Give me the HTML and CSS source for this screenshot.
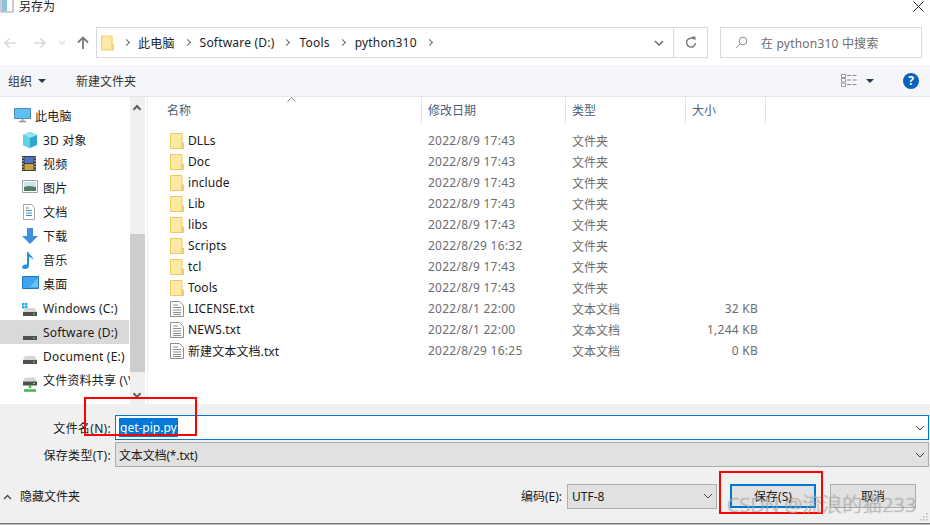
FILE: index.html
```html
<!DOCTYPE html>
<html lang="zh-CN">

<head>
    <meta charset="UTF-8">
    <title>另存为</title>
    <link rel="stylesheet" href="styles.css">
</head>

<body>
    <svg class="sprites" width="0" height="0">
        <symbol id="folder" viewBox="0 0 14 16">
            <path d="M.5.5h11.5v15H.5z" fill="#fde9a3" stroke="#efcb5c" />
            <path d="M12 10h1.500v5.500H12z" fill="#f8dc80" stroke="#efcb5c" />
        </symbol>
        <symbol id="txt" viewBox="0 0 14 16">
            <path d="M.5.5h9l4 4v11H.5z" fill="#fff" stroke="#8e8e8e" />
            <path d="M3 4h5M3 6.500h8M3 9h8M3 11.500h8M3 13.500h8" stroke="#8e8e8e" />
        </symbol>
        <symbol id="drive" viewBox="0 0 14 8">
            <path d="M2 0h10l2 4H0z" fill="#d6d6d6" />
            <path d="M0 4h14v4H0z" fill="#4f4f4f" />
            <path d="M10 5.500h2v1h-2z" fill="#6fe06f" />
        </symbol>
    </svg>

    <div class="dialog">
        <div class="title-bar">
            <svg class="title-icon" width="14" height="14" viewBox="0 0 14 14">
                <path d="M1 0h12v13H1z" fill="#fff" stroke="#9a9a9a" />
                <path d="M2 0h5v12H2z" fill="#8cc3de" />
            </svg>
            <span class="title-text">另存为</span>
            <svg class="close" width="11" height="11" viewBox="0 0 11 11">
                <path d="M.5.500l10 10M10.500.500l-10 10" stroke="#222" fill="none" />
            </svg>
        </div>

        <div class="nav-bar">
            <div class="nav-buttons">
                <svg width="14" height="12" viewBox="0 0 14 12">
                    <path d="M13 6H2M6.500 1.500L2 6l4.500 4.500" stroke="#d8d8d8" stroke-width="1.600" fill="none" />
                </svg>
                <svg width="14" height="12" viewBox="0 0 14 12">
                    <path d="M1 6h11M7.500 1.500L12 6l-4.500 4.500" stroke="#d8d8d8" stroke-width="1.600" fill="none" />
                </svg>
                <svg width="8" height="6" viewBox="0 0 8 6">
                    <path d="M1 1l3 3 3-3" stroke="#d8d8d8" stroke-width="1.300" fill="none" />
                </svg>
                <svg width="12" height="14" viewBox="0 0 12 14">
                    <path d="M6 13V2M1 6.500L6 1.500l5 5" stroke="#7a7a7a" stroke-width="1.800" fill="none" />
                </svg>
            </div>
            <div class="address">
                <svg class="address-folder" width="13" height="16">
                    <use href="#folder" />
                </svg>
                <span class="crumb-arrow"></span>
                <span class="crumb">此电脑</span>
                <span class="crumb-arrow"></span>
                <span class="crumb">Software (D:)</span>
                <span class="crumb-arrow"></span>
                <span class="crumb">Tools</span>
                <span class="crumb-arrow"></span>
                <span class="crumb">python310</span>
                <span class="crumb-arrow"></span>
                <svg class="address-down" width="10" height="6" viewBox="0 0 10 6">
                    <path d="M1 1l4 4 4-4" stroke="#6d6d6d" stroke-width="1.500" fill="none" />
                </svg>
                <div class="refresh">
                    <svg width="12" height="13" viewBox="0 0 12 13">
                        <path d="M8.800 3A4.500 4.500 0 1 0 10.500 7" stroke="#7a7a7a" stroke-width="1.500" fill="none" />
                        <path d="M6.500 0.500h4v4z" fill="#7a7a7a" />
                    </svg>
                </div>
            </div>
            <div class="search">
                <svg width="13" height="13" viewBox="0 0 13 13">
                    <circle cx="8" cy="5" r="3.800" stroke="#8a8a8a" fill="none" />
                    <path d="M5.200 7.800L1 12" stroke="#8a8a8a" fill="none" />
                </svg>
                <span>在 python310 中搜索</span>
            </div>
        </div>

        <div class="toolbar">
            <span class="tool">组织</span>
            <span class="tool-caret"></span>
            <span class="tool tool-new">新建文件夹</span>
            <svg class="view-icon" width="16" height="13" viewBox="0 0 16 13">
                <path d="M.5.500h4v3h-4zM.5 4.500h4v3.500h-4zM.5 9h4v3.500h-4z" fill="none" stroke="#9a9a9a" />
                <path d="M6 1.500h4M11.500 1.500h4M6 6h4M11.500 6h4M6 10.500h4M11.500 10.500h4" stroke="#8a8a8a" />
            </svg>
            <span class="tool-caret tool-caret-view"></span>
            <span class="help">?</span>
        </div>

        <div class="browser">
            <div class="sidebar">
                <div class="side-list">
                    <div class="side-row side-top">
                        <svg width="17" height="15" viewBox="0 0 17 15">
                            <path d="M.5.500h16v10H.5z" fill="#5cc0f0" stroke="#4a8cb5" />
                            <path d="M5 13.500h7M8.500 11v2" stroke="#8a9aa5" stroke-width="1.500" />
                        </svg>
                        <span>此电脑</span>
                    </div>
                    <div class="side-row">
                        <svg width="16" height="16" viewBox="0 0 16 16">
                            <path d="M8 0l7 3v10l-7 3-7-3V3z" fill="#2ba8c9" />
                            <path d="M1 3l7 3 7-3-7-3z" fill="#8fe4ee" />
                            <path d="M1 3l7 3v10l-7-3z" fill="#5fd3e0" />
                        </svg>
                        <span>3D 对象</span>
                    </div>
                    <div class="side-row">
                        <svg width="14" height="15" viewBox="0 0 14 15">
                            <path d="M0 0h14v15H0z" fill="#3b3b3b" />
                            <path d="M2.500 1h9v6h-9z" fill="#4a74c9" />
                            <path d="M2.500 8h9v6h-9z" fill="#c9a13b" />
                            <path d="M1 1v13M13 1v13" stroke="#ddd" stroke-dasharray="1.500 1.500" />
                        </svg>
                        <span>视频</span>
                    </div>
                    <div class="side-row">
                        <svg width="16" height="13" viewBox="0 0 16 13">
                            <path d="M.5.500h15v12H.5z" fill="#fff" stroke="#a0a0a0" />
                            <path d="M2 2h12v5H2z" fill="#cfe3ee" />
                            <path d="M2 7l5-1 7 1v4H2z" fill="#4e7d63" />
                        </svg>
                        <span>图片</span>
                    </div>
                    <div class="side-row">
                        <svg width="14" height="16" viewBox="0 0 14 16">
                            <path d="M1.500.500h8l3 3v12h-11z" fill="#fff" stroke="#a8a8a8" />
                            <path d="M4 4h3M4 6.500h6M4 9h6M4 11.500h6" stroke="#3e8fc4" />
                        </svg>
                        <span>文档</span>
                    </div>
                    <div class="side-row">
                        <svg width="16" height="16" viewBox="0 0 16 16">
                            <path d="M5 0h6v8h5l-8 8-8-8h5z" fill="#3f8fdc" />
                        </svg>
                        <span>下载</span>
                    </div>
                    <div class="side-row">
                        <svg width="12" height="17" viewBox="0 0 12 17">
                            <path d="M5 0h1.500c.5 3 5 4 4.500 8-1-2-2.500-3-4-3v9c0 2-2 3-4 3s-3-1-3-2 2-3 5-2.500z" fill="#2b8fe0" />
                        </svg>
                        <span>音乐</span>
                    </div>
                    <div class="side-row">
                        <svg width="17" height="13" viewBox="0 0 17 13">
                            <path d="M.5.500h16v12H.5z" fill="#3ea6ee" stroke="#1a78c8" />
                            <path d="M8 11l8-9v9z" fill="#6cc3f5" />
                        </svg>
                        <span>桌面</span>
                    </div>
                    <div class="side-row side-drive">
                        <svg width="15" height="17" viewBox="0 0 15 17">
                            <path d="M0 0h2.500v2.500H0zM3 0h2.500v2.500H3zM0 3h2.500v2.500H0zM3 3h2.500v2.500H3z" fill="#25b0ea" />
                            <use href="#drive" x="1" y="5" width="14" height="8" />
                        </svg>
                        <span>Windows (C:)</span>
                    </div>
                    <div class="side-row side-drive side-on">
                        <svg width="15" height="17" viewBox="0 0 15 17">
                            <use href="#drive" x="1" y="5" width="14" height="8" />
                        </svg>
                        <span>Software (D:)</span>
                    </div>
                    <div class="side-row side-drive">
                        <svg width="15" height="17" viewBox="0 0 15 17">
                            <use href="#drive" x="1" y="5" width="14" height="8" />
                        </svg>
                        <span>Document (E:)</span>
                    </div>
                    <div class="side-row side-share">
                        <svg width="15" height="15" viewBox="0 0 15 15">
                            <use href="#drive" x="1" y="0" width="14" height="9" />
                            <path d="M8 8v3M2 13.500h12" stroke="#3fb54a" stroke-width="2.500" />
                        </svg>
                        <span>文件资料共享 (\\</span>
                    </div>
                </div>
                <div class="side-scroll">
                    <span class="scroll-up"></span>
                    <span class="scroll-thumb"></span>
                    <span class="scroll-down"></span>
                </div>
            </div>

            <div class="files">
                <div class="file-head">
                    <span class="col-name">名称</span>
                    <span class="col-date">修改日期</span>
                    <span class="col-type">类型</span>
                    <span class="col-size">大小</span>
                    <svg class="sort-mark" width="9" height="5" viewBox="0 0 9 5">
                        <path d="M.5 4.500l4-4 4 4" stroke="#8a8a8a" fill="none" />
                    </svg>
                </div>
                <div class="file-row"><span class="file-name"><svg width="14" height="16"><use href="#folder" /></svg>DLLs</span><span class="file-date">2022/8/9 17:43</span><span class="file-type">文件夹</span><span class="file-size"></span></div>
                <div class="file-row"><span class="file-name"><svg width="14" height="16"><use href="#folder" /></svg>Doc</span><span class="file-date">2022/8/9 17:43</span><span class="file-type">文件夹</span><span class="file-size"></span></div>
                <div class="file-row"><span class="file-name"><svg width="14" height="16"><use href="#folder" /></svg>include</span><span class="file-date">2022/8/9 17:43</span><span class="file-type">文件夹</span><span class="file-size"></span></div>
                <div class="file-row"><span class="file-name"><svg width="14" height="16"><use href="#folder" /></svg>Lib</span><span class="file-date">2022/8/9 17:43</span><span class="file-type">文件夹</span><span class="file-size"></span></div>
                <div class="file-row"><span class="file-name"><svg width="14" height="16"><use href="#folder" /></svg>libs</span><span class="file-date">2022/8/9 17:43</span><span class="file-type">文件夹</span><span class="file-size"></span></div>
                <div class="file-row"><span class="file-name"><svg width="14" height="16"><use href="#folder" /></svg>Scripts</span><span class="file-date">2022/8/29 16:32</span><span class="file-type">文件夹</span><span class="file-size"></span></div>
                <div class="file-row"><span class="file-name"><svg width="14" height="16"><use href="#folder" /></svg>tcl</span><span class="file-date">2022/8/9 17:43</span><span class="file-type">文件夹</span><span class="file-size"></span></div>
                <div class="file-row"><span class="file-name"><svg width="14" height="16"><use href="#folder" /></svg>Tools</span><span class="file-date">2022/8/9 17:43</span><span class="file-type">文件夹</span><span class="file-size"></span></div>
                <div class="file-row"><span class="file-name"><svg width="14" height="16"><use href="#txt" /></svg>LICENSE.txt</span><span class="file-date">2022/8/1 22:00</span><span class="file-type">文本文档</span><span class="file-size">32 KB</span></div>
                <div class="file-row"><span class="file-name"><svg width="14" height="16"><use href="#txt" /></svg>NEWS.txt</span><span class="file-date">2022/8/1 22:00</span><span class="file-type">文本文档</span><span class="file-size">1,244 KB</span></div>
                <div class="file-row"><span class="file-name"><svg width="14" height="16"><use href="#txt" /></svg>新建文本文档.txt</span><span class="file-date">2022/8/29 16:25</span><span class="file-type">文本文档</span><span class="file-size">0 KB</span></div>
            </div>
        </div>

        <div class="save-panel">
            <div class="field-row">
                <label class="field-label">文件名(N):</label>
                <div class="field-input">
                    <span class="selected">get-pip.py</span>
                    <svg class="field-down" width="10" height="6" viewBox="0 0 10 6">
                        <path d="M1 1l4 4 4-4" stroke="#444" fill="none" />
                    </svg>
                </div>
            </div>
            <div class="field-row">
                <label class="field-label">保存类型(T):</label>
                <div class="field-select">
                    <span class="select-text">文本文档(*.txt)</span>
                    <svg class="field-down" width="10" height="6" viewBox="0 0 10 6">
                        <path d="M1 1l4 4 4-4" stroke="#444" fill="none" />
                    </svg>
                </div>
            </div>
            <div class="action-row">
                <svg class="hide-caret" width="9" height="6" viewBox="0 0 9 6">
                    <path d="M1 5l3.500-3.500L8 5" stroke="#555" stroke-width="1.500" fill="none" />
                </svg>
                <span class="hide-text">隐藏文件夹</span>
                <span class="enc-label">编码(E):</span>
                <div class="enc-select">
                    <span>UTF-8</span>
                    <svg width="10" height="6" viewBox="0 0 10 6">
                        <path d="M1 1l4 4 4-4" stroke="#444" fill="none" />
                    </svg>
                </div>
                <button class="btn btn-main">保存(S)</button>
                <button class="btn">取消</button>
            </div>
        </div>

        <svg class="grip" width="8" height="8" viewBox="0 0 8 8">
            <path d="M6 0h1.500v1.500H6zM3 3h1.500v1.500H3zM6 3h1.500v1.500H6zM0 6h1.500v1.500H0zM3 6h1.500v1.500H3zM6 6h1.500v1.500H6z" fill="#b8b8b8" />
        </svg>
        <div class="red-box red-name"></div>
        <div class="red-box red-save"></div>
        <div class="watermark">CSDN @流浪的猫233</div>
    </div>
</body>

</html>
```

FILE: styles.css
```css
* {
    box-sizing: border-box;
}

html, body {
    margin: 0;
    padding: 0;
}

body {
    width: 930px;
    height: 525px;
    overflow: hidden;
    background: #fff;
    font-family: "Noto Sans", "Noto Sans CJK SC", sans-serif;
    font-size: 12px;
    color: #1a1a1a;
}

.sprites {
    display: block;
    height: 0;
}

svg {
    display: block;
    flex: none;
}

.dialog {
    position: relative;
    width: 930px;
    height: 525px;
    overflow: hidden;
}

/* title */
.title-bar {
    display: flex;
    align-items: center;
    height: 13px;
}

.title-icon {
    margin-top: -1px;
}

.title-text {
    margin-left: 5px;
    line-height: 13px;
}

.close {
    margin-left: auto;
    margin-right: 6px;
}

/* address row */
.nav-bar {
    display: flex;
    align-items: flex-start;
    height: 52px;
    padding-top: 14px;
}

.nav-buttons {
    display: flex;
    align-items: center;
    width: 96px;
    height: 31px;
    padding-left: 3px;
}

.nav-buttons svg:nth-child(2) {
    margin-left: 16px;
}

.nav-buttons svg:nth-child(3) {
    margin-left: 11px;
}

.nav-buttons svg:nth-child(4) {
    margin-left: 11px;
}

.address {
    display: flex;
    align-items: center;
    width: 612px;
    height: 31px;
    padding-left: 4px;
    border: 1px solid #d9d9d9;
    color: #222;
    letter-spacing: .2px;
}

.crumb-arrow {
    width: 5px;
    height: 5px;
    margin: 0 10px;
    border-top: 1.5px solid #666;
    border-right: 1.5px solid #666;
    transform: rotate(45deg);
}

.address-folder + .crumb-arrow {
    margin-left: 10px;
    margin-right: 9px;
}

.address-down {
    margin-left: auto;
    margin-right: 9px;
}

.refresh {
    display: flex;
    align-items: center;
    justify-content: center;
    width: 34px;
    height: 29px;
    border-left: 1px solid #d9d9d9;
}

.search {
    display: flex;
    align-items: center;
    width: 202px;
    height: 31px;
    margin-left: 12px;
    padding-left: 14px;
    border: 1px solid #d9d9d9;
    color: #6d6d6d;
    letter-spacing: .2px;
}

.search span {
    margin-left: 13px;
}

/* toolbar */
.toolbar {
    display: flex;
    align-items: center;
    height: 32px;
    padding-left: 8px;
    background: #f4f6f9;
    border-bottom: 1px solid #e6e6e6;
    color: #333;
}

.tool-caret {
    width: 0;
    height: 0;
    margin-left: 6px;
    border-left: 4px solid transparent;
    border-right: 4px solid transparent;
    border-top: 4px solid #2a3a55;
}

.tool-new {
    margin-left: 30px;
}

.view-icon {
    margin-left: auto;
}

.tool-caret-view {
    margin-left: 9px;
}

.help {
    width: 16px;
    height: 16px;
    margin-left: 29px;
    margin-right: 11px;
    border-radius: 50%;
    background: #0a63b8;
    color: #fff;
    font-size: 12px;
    font-weight: 700;
    line-height: 16px;
    text-align: center;
}

/* side tree */
.browser {
    display: flex;
    height: 307px;
}

.sidebar {
    display: flex;
    width: 148px;
    border-right: 1px solid #eeeeee;
}

.side-list {
    width: 130px;
    overflow: hidden;
    padding-top: 7px;
}

.side-row {
    position: relative;
    display: flex;
    align-items: center;
    width: 129px;
    height: 24px;
    padding-left: 43px;
    white-space: nowrap;
    letter-spacing: .2px;
}

.side-row svg {
    position: absolute;
    left: 22px;
    top: 4px;
}

.side-top {
    padding-left: 35px;
}

.side-top svg {
    left: 14px;
}

.side-on {
    background: #d9d9d9;
}

.side-drive svg {
    top: 7px;
}

.side-share svg {
    top: 9px;
}

.side-scroll {
    position: relative;
    width: 15px;
    background: #f0f0f0;
}

.scroll-thumb {
    position: absolute;
    left: 0;
    top: 137px;
    width: 15px;
    height: 138px;
    background: #cdcdcd;
}

.scroll-up, .scroll-down {
    position: absolute;
    left: 4px;
    width: 6px;
    height: 6px;
    border-top: 2px solid #606060;
    border-left: 2px solid #606060;
    transform: rotate(45deg);
}

.scroll-up {
    top: 9px;
}

.scroll-down {
    top: 294px;
    transform: rotate(225deg);
}

/* file list */
.files {
    width: 782px;
}

.file-head {
    position: relative;
    display: grid;
    grid-template-columns: 274px 144px 120px 80px;
    height: 33px;
    color: #4c607a;
}

.file-head span {
    display: flex;
    align-items: center;
    height: 26px;
    padding-left: 6px;
    border-right: 1px solid #e4e4e4;
}

.file-head .col-name {
    padding-left: 19px;
}

.sort-mark {
    position: absolute;
    left: 139px;
    top: 0;
}

.file-row {
    display: grid;
    grid-template-columns: 274px 144px 120px 72px;
    align-items: center;
    height: 21px;
    color: #6d6d6d;
}

.file-name {
    display: flex;
    align-items: center;
    gap: 4px;
    padding-left: 22px;
    color: #1a1a1a;
    letter-spacing: .1px;
}

.file-date, .file-type {
    padding-left: 6px;
}

.file-date, .file-size {
    letter-spacing: .25px;
}

.file-size {
    text-align: right;
}

/* bottom panel */
.save-panel {
    height: 121px;
    padding-top: 11px;
    background: #f0f0f0;
    border-bottom: 1px solid #b5b5b5;
    box-shadow: inset 0 -1px 0 #777;
}

.field-row {
    display: flex;
    align-items: center;
    height: 25px;
    margin-bottom: 2px;
}

.field-label {
    width: 111px;
    text-align: right;
    letter-spacing: .3px;
}

.field-input, .field-select {
    display: flex;
    align-items: center;
    width: 814px;
    height: 25px;
    margin-left: 4px;
    padding-left: 3px;
}

.field-input {
    background: #fff;
    border: 1px solid #0078d7;
}

.field-select {
    padding-left: 3px;
    background: #e1e1e1;
    border: 1px solid #adadad;
}

.select-text {
    letter-spacing: -.15px;
}

.selected {
    padding: 0 1px;
    background: #0078d7;
    color: #fff;
    line-height: 19px;
}

.field-down {
    margin-left: auto;
    margin-right: 3px;
}

.action-row {
    position: relative;
    display: flex;
    align-items: center;
    height: 26px;
    margin-top: 16px;
    padding-left: 3px;
}

.hide-text {
    margin-left: 8px;
}

.hide-caret {
    margin-top: 2px;
}

.enc-label {
    margin-left: auto;
    margin-right: 5px;
}

.enc-select {
    display: flex;
    align-items: center;
    justify-content: space-between;
    width: 150px;
    height: 25px;
    padding: 0 3px 0 4px;
    background: #e1e1e1;
    border: 1px solid #adadad;
}

.btn {
    width: 86px;
    height: 24px;
    margin-left: 13px;
    padding: 0;
    background: #e1e1e1;
    border: 1px solid #adadad;
    color: #1a1a1a;
    font: inherit;
}

.btn-main {
    border: 2px solid #0078d7;
}

.btn:last-child {
    margin-left: 14px;
    margin-right: 14px;
}

/* overlays drawn on the screenshot */
.grip {
    position: absolute;
    right: 2px;
    bottom: 4px;
}

.red-box {
    position: absolute;
    border: 2px solid #f00;
}

.red-name {
    left: 84px;
    top: 397px;
    width: 113px;
    height: 39px;
}

.red-save {
    left: 719px;
    top: 471px;
    width: 104px;
    height: 43px;
}

.watermark {
    position: absolute;
    left: 727px;
    top: 491px;
    color: rgba(215, 215, 215, .5);
    font-size: 20px;
    font-weight: 300;
    line-height: 28px;
    white-space: nowrap;
    text-shadow: 0 0 1px rgba(90, 90, 90, .65);
}
```
